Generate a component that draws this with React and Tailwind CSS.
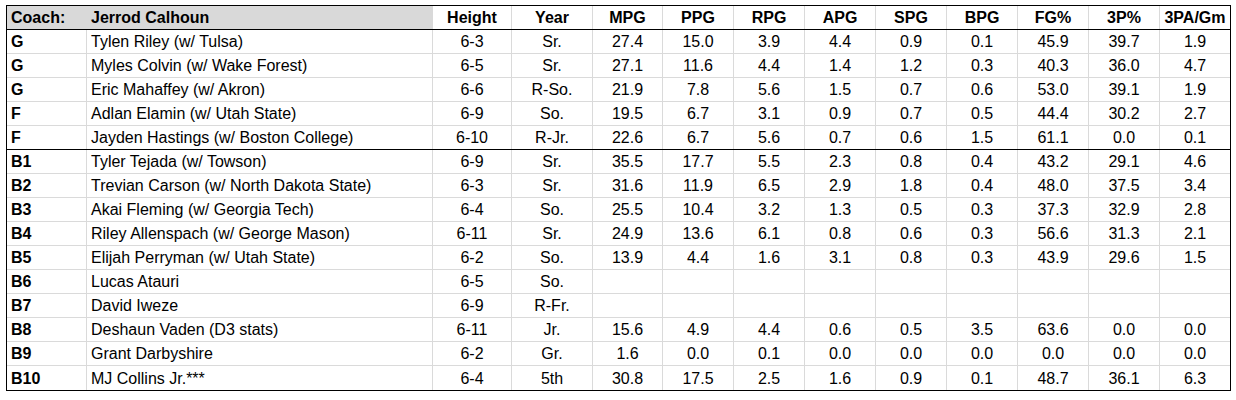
const rows = [
  ["G", "Tylen Riley (w/ Tulsa)", "6-3", "Sr.", "27.4", "15.0", "3.9", "4.4", "0.9", "0.1", "45.9", "39.7", "1.9"],
  ["G", "Myles Colvin (w/ Wake Forest)", "6-5", "Sr.", "27.1", "11.6", "4.4", "1.4", "1.2", "0.3", "40.3", "36.0", "4.7"],
  ["G", "Eric Mahaffey (w/ Akron)", "6-6", "R-So.", "21.9", "7.8", "5.6", "1.5", "0.7", "0.6", "53.0", "39.1", "1.9"],
  ["F", "Adlan Elamin (w/ Utah State)", "6-9", "So.", "19.5", "6.7", "3.1", "0.9", "0.7", "0.5", "44.4", "30.2", "2.7"],
  ["F", "Jayden Hastings (w/ Boston College)", "6-10", "R-Jr.", "22.6", "6.7", "5.6", "0.7", "0.6", "1.5", "61.1", "0.0", "0.1"],
  ["B1", "Tyler Tejada (w/ Towson)", "6-9", "Sr.", "35.5", "17.7", "5.5", "2.3", "0.8", "0.4", "43.2", "29.1", "4.6"],
  ["B2", "Trevian Carson (w/ North Dakota State)", "6-3", "Sr.", "31.6", "11.9", "6.5", "2.9", "1.8", "0.4", "48.0", "37.5", "3.4"],
  ["B3", "Akai Fleming (w/ Georgia Tech)", "6-4", "So.", "25.5", "10.4", "3.2", "1.3", "0.5", "0.3", "37.3", "32.9", "2.8"],
  ["B4", "Riley Allenspach (w/ George Mason)", "6-11", "Sr.", "24.9", "13.6", "6.1", "0.8", "0.6", "0.3", "56.6", "31.3", "2.1"],
  ["B5", "Elijah Perryman (w/ Utah State)", "6-2", "So.", "13.9", "4.4", "1.6", "3.1", "0.8", "0.3", "43.9", "29.6", "1.5"],
  ["B6", "Lucas Atauri", "6-5", "So.", "", "", "", "", "", "", "", "", ""],
  ["B7", "David Iweze", "6-9", "R-Fr.", "", "", "", "", "", "", "", "", ""],
  ["B8", "Deshaun Vaden (D3 stats)", "6-11", "Jr.", "15.6", "4.9", "4.4", "0.6", "0.5", "3.5", "63.6", "0.0", "0.0"],
  ["B9", "Grant Darbyshire", "6-2", "Gr.", "1.6", "0.0", "0.1", "0.0", "0.0", "0.0", "0.0", "0.0", "0.0"],
  ["B10", "MJ Collins Jr.***", "6-4", "5th", "30.8", "17.5", "2.5", "1.6", "0.9", "0.1", "48.7", "36.1", "6.3"],
];

const stats = ["Height", "Year", "MPG", "PPG", "RPG", "APG", "SPG", "BPG", "FG%", "3P%", "3PA/Gm"];

const cols = "grid grid-cols-[80px_346px_79px_81px_70px_71px_71px_71px_71px_71px_71px_71px_1fr]";

export default function App() {
  return (
    <div className="bg-white w-[1236px] h-[400px] pt-[5px] pl-[6px]" style={{ fontFamily: '"Liberation Sans", Arial, sans-serif' }}>
      <div className="w-[1225px] border border-black text-[16px] text-black leading-none">
        {/* header */}
        <div className={`${cols} h-6 border-b border-black font-bold`}>
          <div className="bg-[#d9d9d9] flex items-center pl-1">Coach:</div>
          <div className="bg-[#d9d9d9] flex items-center pl-1">Jerrod Calhoun</div>
          {stats.map((s, i) => (
            <div key={s} className={`flex items-center justify-center ${i < stats.length - 1 ? "border-r border-[#dadada]" : ""}`}>{s}</div>
          ))}
        </div>

        {rows.map((r, ri) => {
          const last = ri === rows.length - 1;
          const sep = ri === 4;
          return (
            <div key={ri} className={`${cols} h-6 ${last ? "" : sep ? "border-b border-black" : "border-b border-[#dadada]"}`}>
              {r.map((c, ci) => (
                <div key={ci}
                  className={`flex items-center pt-px ${ci < 2 ? "pl-1" : "justify-center"} ${ci === 0 ? "font-bold" : ""} ${ci < r.length - 1 ? "border-r border-[#dadada]" : ""}`}>
                  {c}
                </div>
              ))}
            </div>
          );
        })}
      </div>
    </div>
  );
}
